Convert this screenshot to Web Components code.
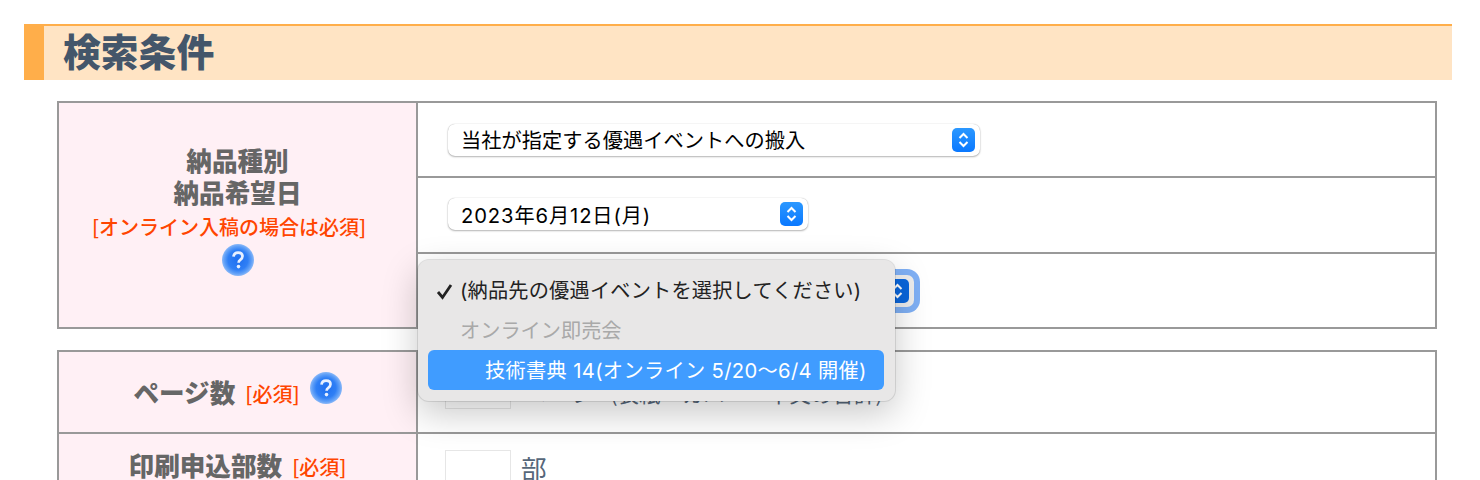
<!DOCTYPE html>
<html lang="ja">
<head>
<meta charset="utf-8">
<title>検索条件</title>
<style>
  html, body { margin: 0; height: 480px; overflow: hidden; background: #fff; }
  body { font-family: "Noto Sans CJK JP", sans-serif; }
</style>
</head>
<body>

<search-page>
  <section-heading>検索条件</section-heading>

  <form-table>
    <form-row>
      <label-cell pad="11">
        <div>納品種別</div>
        <div>納品希望日</div>
        <required-note block>[オンライン入稿の場合は必須]</required-note>
        <help-icon block></help-icon>
      </label-cell>
      <value-stack>
        <value-cell h="73"><mac-select width="532" style="letter-spacing:.06px">当社が指定する優遇イベントへの搬入</mac-select></value-cell>
        <value-cell h="74" line lift><mac-select width="360" style="letter-spacing:.9px">2023年6月12日(月)</mac-select></value-cell>
        <value-cell h="73" line>
          <mac-select width="466" focused></mac-select>
          <select-popup>
            <popup-item checked style="letter-spacing:.2px">(納品先の優遇イベントを選択してください)</popup-item>
            <popup-item disabled>オンライン即売会</popup-item>
            <popup-item active style="letter-spacing:.35px">技術書典 14(オンライン 5/20〜6/4 開催)</popup-item>
          </select-popup>
        </value-cell>
      </value-stack>
    </form-row>
  </form-table>

  <form-table>
    <form-row>
      <label-cell>
        <label-line help>ページ数<required-note>[必須]</required-note></label-line>
      </label-cell>
      <value-stack>
        <value-cell h="80" top="17"><qty-input unit="ページ" note="(表紙・カバー・本文の合計)"></qty-input></value-cell>
      </value-stack>
    </form-row>
    <form-row line>
      <label-cell>
        <label-line>印刷申込部数<required-note>[必須]</required-note></label-line>
      </label-cell>
      <value-stack>
        <value-cell h="66" top="16"><qty-input unit="部"></qty-input></value-cell>
      </value-stack>
    </form-row>
  </form-table>
</search-page>

<script>
class SearchPage extends HTMLElement {
  connectedCallback() {
    this.attachShadow({ mode: 'open' });
    this.shadowRoot.innerHTML = `
      <style>
        :host { display: block; padding: 24px 28px 0 24px; }
      </style>
      <slot></slot>
    `;
  }
}

class SectionHeading extends HTMLElement {
  connectedCallback() {
    this.attachShadow({ mode: 'open' });
    this.shadowRoot.innerHTML = `
      <style>
        :host {
          display: block;
          box-sizing: border-box;
          height: 56px;
          border-top: 2px solid #ffae4a;
          border-left: 20px solid #ffae4a;
          background: #ffe4c4;
          padding-left: 19px;
          color: #44566a;
          font-size: 37.8px;
          font-weight: 900;
          line-height: 48px;
        }
      </style>
      <slot></slot>
    `;
  }
}

class FormTable extends HTMLElement {
  connectedCallback() {
    this.attachShadow({ mode: 'open' });
    this.shadowRoot.innerHTML = `
      <style>
        :host {
          display: block;
          margin: 21px 15px 0 33px;
          border: 2px solid #999;
          background: #fff;
        }
      </style>
      <slot></slot>
    `;
  }
}

class FormRow extends HTMLElement {
  connectedCallback() {
    this.attachShadow({ mode: 'open' });
    this.shadowRoot.innerHTML = `
      <style>
        :host { display: flex; }
        :host([line]) { border-top: 2px solid #999; }
      </style>
      <slot></slot>
    `;
  }
}

class LabelCell extends HTMLElement {
  connectedCallback() {
    this.attachShadow({ mode: 'open' });
    const pad = this.getAttribute('pad') || 0;
    this.shadowRoot.innerHTML = `
      <style>
        :host {
          flex: 0 0 357px;
          display: flex;
          flex-direction: column;
          justify-content: center;
          align-items: center;
          padding-bottom: ${pad}px;
          border-right: 2px solid #999;
          background: #fff0f5;
          color: #666;
          font-size: 25.6px;
          font-weight: 900;
          line-height: 32px;
          text-align: center;
        }
      </style>
      <slot></slot>
    `;
  }
}

class LabelLine extends HTMLElement {
  connectedCallback() {
    this.attachShadow({ mode: 'open' });
    const help = this.hasAttribute('help') ? '<help-icon></help-icon>' : '';
    this.shadowRoot.innerHTML = `
      <style>
        :host { display: flex; align-items: flex-start; gap: 10px; white-space: nowrap; }
        :host([help]) { margin-top: 4px; }
        help-icon { margin-top: -4px; }
      </style>
      <slot></slot>${help}
    `;
  }
}

class ValueStack extends HTMLElement {
  connectedCallback() {
    this.attachShadow({ mode: 'open' });
    this.shadowRoot.innerHTML = `
      <style>
        :host { flex: 1; display: block; min-width: 0; }
      </style>
      <slot></slot>
    `;
  }
}

class ValueCell extends HTMLElement {
  connectedCallback() {
    this.attachShadow({ mode: 'open' });
    const h = +this.getAttribute('h');
    const top = +this.getAttribute('top') || 0;
    this.shadowRoot.innerHTML = `
      <style>
        :host {
          position: relative;
          display: flex;
          align-items: center;
          height: ${h}px;
          padding-left: 30px;
        }
        :host([line]) { border-top: 2px solid #999; }
        :host([lift]) { height: ${h - 2}px; padding-bottom: 2px; }
        :host([top]) { align-items: flex-start; height: ${h - top}px; padding-top: ${top}px; }
      </style>
      <slot></slot>
    `;
  }
}

class RequiredNote extends HTMLElement {
  connectedCallback() {
    this.attachShadow({ mode: 'open' });
    this.shadowRoot.innerHTML = `
      <style>
        :host {
          display: inline-block;
          color: #ff4500;
          font-size: 20px;
          font-weight: 500;
          line-height: 36px;
        }
        :host([block]) { display: block; margin-top: 2px; line-height: 34px; padding-right: 17px; }
      </style>
      <slot></slot>
    `;
  }
}

class HelpIcon extends HTMLElement {
  connectedCallback() {
    this.attachShadow({ mode: 'open' });
    this.shadowRoot.innerHTML = `
      <style>
        :host { display: block; flex: none; width: 32px; height: 32px; }
        svg { display: block; }
      </style>
      <svg width="32" height="32" viewBox="0 0 32 32">
        <defs>
          <radialGradient id="ball" cx="50%" cy="50%" r="50%">
            <stop offset="0" stop-color="#1f6ff0"/>
            <stop offset="0.62" stop-color="#2f7ff5"/>
            <stop offset="0.85" stop-color="#5f9ff7"/>
            <stop offset="1" stop-color="#8ab8f8"/>
          </radialGradient>
        </defs>
        <circle cx="16" cy="16" r="16" fill="url(#ball)"/>
        <path d="M11.5 12.6c.3-2.7 2.2-4 4.6-4 2.6 0 4.4 1.5 4.4 3.7 0 1.7-.9 2.6-2.2 3.5-1.2.8-1.7 1.4-1.7 2.9" fill="none" stroke="#e8f0ff" stroke-width="2.7"/>
        <circle cx="16.5" cy="22.6" r="1.8" fill="#e8f0ff"/>
      </svg>
    `;
  }
}

class MacSelect extends HTMLElement {
  connectedCallback() {
    this.attachShadow({ mode: 'open' });
    this.shadowRoot.innerHTML = `
      <style>
        :host {
          display: flex;
          align-items: center;
          box-sizing: border-box;
          width: ${this.getAttribute('width')}px;
          height: 32px;
          padding: 0 5px 0 13px;
          border-radius: 7px;
          background: #fff;
          box-shadow: 0 0 1px rgba(0,0,0,.3), 0 1px 2px rgba(0,0,0,.28);
          color: #000;
          font-family: Inter, "Noto Sans CJK JP", sans-serif;
          font-size: 20.2px;
        }
        :host([focused]) { background: #eee; box-shadow: 0 0 0 6px #7fb0f5; }
        .label { flex: 1; white-space: nowrap; }
        .stepper {
          width: 23px;
          height: 24px;
          border-radius: 5px;
          background: linear-gradient(#2b98ff, #0a78ff);
        }
        :host([focused]) .stepper { background: #0a66dc; }
        svg { display: block; }
      </style>
      <span class="label"><slot></slot></span>
      <span class="stepper">
        <svg width="23" height="24" viewBox="0 0 23 24" fill="none" stroke="#fff" stroke-width="2">
          <path d="M7.5 10l4-4 4 4M7.5 14l4 4 4-4"/>
        </svg>
      </span>
    `;
  }
}

class SelectPopup extends HTMLElement {
  connectedCallback() {
    this.attachShadow({ mode: 'open' });
    this.shadowRoot.innerHTML = `
      <style>
        :host {
          position: absolute;
          left: 0;
          top: 6px;
          z-index: 10;
          box-sizing: border-box;
          width: 477px;
          height: 141px;
          padding: 10px 11px 0 10px;
          border-radius: 11px;
          background: #e8e7e7;
          box-shadow: 0 0 0 1px rgba(0,0,0,.1), 0 12px 36px rgba(0,0,0,.22);
        }
      </style>
      <slot></slot>
    `;
  }
}

class PopupItem extends HTMLElement {
  connectedCallback() {
    this.attachShadow({ mode: 'open' });
    this.shadowRoot.innerHTML = `
      <style>
        :host {
          position: relative;
          display: block;
          height: 40px;
          padding-left: 32px;
          border-radius: 6px;
          color: #222;
          font-family: Inter, "Noto Sans CJK JP", sans-serif;
          font-size: 20.2px;
          line-height: 42px;
          white-space: nowrap;
        }
        :host([disabled]) { color: #a9a9a9; }
        :host([active]) { padding-left: 57px; background: #409cff; color: #fff; }
        svg { position: absolute; left: 8px; top: 13px; }
      </style>
      ${this.hasAttribute('checked') ? `
      <svg width="18" height="17" viewBox="0 0 18 17" fill="none" stroke="#222" stroke-width="2.8">
        <path d="M2 9l4.5 5.5L15 2"/>
      </svg>` : ''}
      <slot></slot>
    `;
  }
}

class QtyInput extends HTMLElement {
  connectedCallback() {
    this.attachShadow({ mode: 'open' });
    const note = this.getAttribute('note');
    this.shadowRoot.innerHTML = `
      <style>
        :host {
          display: flex;
          align-items: center;
          gap: 10px;
          margin-left: -3px;
          color: #56677a;
          font-size: 25.6px;
          line-height: 32px;
          white-space: nowrap;
        }
        .box {
          box-sizing: border-box;
          flex: none;
          width: 66px;
          height: 40px;
          border: 1px solid #e6e6e6;
          background: #fff;
        }
        .unit { margin-bottom: 4px; }
        .noted { margin: 5px 0 0; }
        .note { margin-left: 13px; font-size: 21.5px; }
      </style>
      <span class="box"></span>
      <span class="unit ${note ? 'noted' : ''}">${this.getAttribute('unit')}${note ? `<span class="note">${note}</span>` : ''}</span>
    `;
  }
}

customElements.define('search-page', SearchPage);
customElements.define('section-heading', SectionHeading);
customElements.define('form-table', FormTable);
customElements.define('form-row', FormRow);
customElements.define('label-cell', LabelCell);
customElements.define('label-line', LabelLine);
customElements.define('value-stack', ValueStack);
customElements.define('value-cell', ValueCell);
customElements.define('required-note', RequiredNote);
customElements.define('help-icon', HelpIcon);
customElements.define('mac-select', MacSelect);
customElements.define('select-popup', SelectPopup);
customElements.define('popup-item', PopupItem);
customElements.define('qty-input', QtyInput);
</script>
</body>
</html>
